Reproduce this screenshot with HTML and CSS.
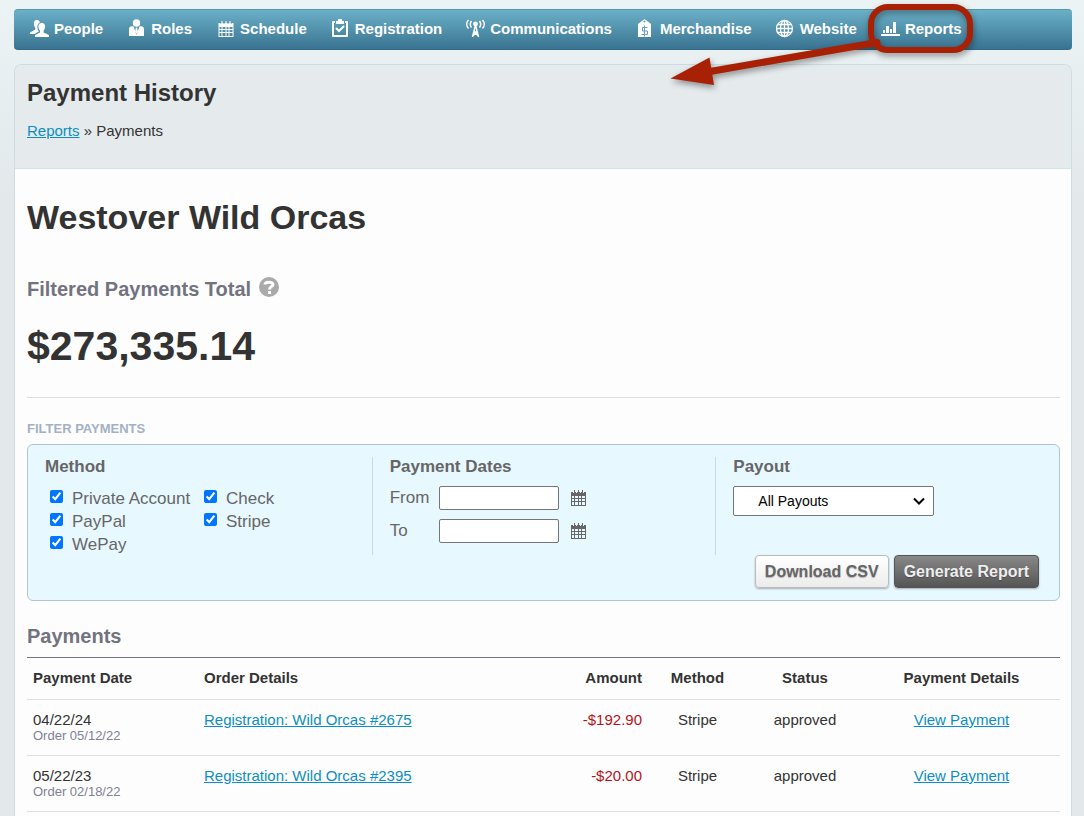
FILE: index.html
```html
<!DOCTYPE html>
<html lang="en">
<head>
<meta charset="utf-8">
<meta name="viewport" content="width=device-width, initial-scale=1">
<title>Payment History</title>
<link rel="stylesheet" href="styles.css">
</head>
<body>
<svg class="sprite" aria-hidden="true">
  <symbol id="calendar" viewBox="0 0 15 16">
    <path fill="currentColor" fill-rule="evenodd" d="M0 2h15v14H0zM1 6v2h2V6zm3 0v2h3V6zm4 0v2h2V6zm3 0v2h3V6zM1 9v2h2V9zm3 0v2h3V9zm4 0v2h2V9zm3 0v2h3V9zM1 12v3h2v-3zm3 0v3h3v-3zm4 0v3h2v-3zm3 0v3h3v-3zM2 2v1h1V2zm3 0v1h1V2zm4 0v1h1V2zm3 0v1h1V2z"/>
    <path fill="currentColor" d="M3 0h1v3H3zM7 0h1v3H7zM11 0h1v3h-1z"/>
  </symbol>
</svg>
<div class="page">
  <nav class="nav" aria-label="Main">
    <ul class="nav-list">
      <li><a href="#"><svg class="icon" viewBox="0 0 20 20"><path fill="#fff" d="M7 1c-2.500 0-3.500 2-3 4.500C4.200 7 4.700 8 5.300 8.700v1.800L0 13.500V15h5c.5-1 2-1.500 4-2.300C7 10 7 6 8.500 4.500 9 3.800 10 3.500 10 3.500 9.800 2 8.500 1 7 1z"/><path fill="#fff" d="M12 4c-3 0-4 2.300-3.400 4.800.2 1.200.8 2.200 1.400 2.800v1.900L5 16v2h14v-2l-5.400-2.500v-1.900c.7-.6 1.200-1.600 1.400-2.800.5-2.500-.5-4.800-3-4.800z"/></svg>People</a></li>
      <li><a href="#"><svg class="icon" viewBox="0 0 20 20"><circle cx="9.500" cy="4" r="3.700" fill="#fff"/><path fill="#fff" d="M2 17V10c0-1.500 1-2.500 3-2.700h1.500l3 8.700 3-8.700H14c2 .2 3 1.200 3 2.700v7z"/><path fill="#fff" d="M8.800 8.500h1.400l.6 4-1.300 2.500-1.300-2.500z"/></svg>Roles</a></li>
      <li><a href="#"><svg class="icon nav-cal"><use href="#calendar"/></svg>Schedule</a></li>
      <li><a href="#"><svg class="icon" viewBox="0 0 20 20"><path fill="none" stroke="#fff" stroke-width="2" stroke-linejoin="round" d="M4 3H2v14h14V3h-2"/><path fill="#fff" d="M5 2h2V0h4v2h2v3H5z"/><path fill="none" stroke="#fff" stroke-width="2" d="M5 9l3 3 5-5"/></svg>Registration</a></li>
      <li><a href="#"><svg class="icon" viewBox="0 0 20 20"><g fill="none" stroke="#fff" stroke-width="1.500"><path d="M2.500 1C.2 3.500.2 7 2.500 9.500M5.500 2C4 4 4 6.500 5.500 8.500M16.500 1c2.300 2.500 2.300 6 0 8.500M13.500 2c1.500 2 1.500 4.500 0 6.500M9.500 6L6.500 18M9.500 6l3 12M7.500 13h4M6 17.500l5-4.500M13 17.500L8 13"/></g><circle cx="9.500" cy="5" r="2.400" fill="#fff"/></svg>Communications</a></li>
      <li><a href="#"><svg class="icon" viewBox="0 0 20 20"><path fill="#fff" fill-rule="evenodd" d="M8.500 0L15 5v13H2V5zm0 1.500a1 1 0 100 2 1 1 0 000-2z"/><path fill="none" stroke="#6b9dbd" d="M11.500 8.500H6.500v3.500h5v3.500H5.500M8.500 6.500v11"/></svg>Merchandise</a></li>
      <li><a href="#"><svg class="icon" viewBox="0 0 20 20"><g fill="none" stroke="#fff" stroke-width="1.300"><circle cx="8.500" cy="9.500" r="8"/><ellipse cx="8.500" cy="9.500" rx="4" ry="8"/><path d="M8.500 1.500v16M.5 9.500h16M1.800 5.500h13.400M1.800 13.500h13.400"/></g></svg>Website</a></li>
      <li class="marked"><a href="#"><svg class="icon" viewBox="0 0 20 20"><path fill="#fff" d="M0 15h19v2H0zM2 11h2v3H2zM5 7h3v7H5zM9 10h2v4H9zM12 3h3v11h-3z"/></svg>Reports</a>
        <svg class="callout" viewBox="0 0 320 100" aria-hidden="true">
          <g>
            <rect x="211" y="7" width="99" height="43" rx="17" fill="none" stroke="#a92104" stroke-width="6"/>
            <path fill="none" stroke="#a92104" stroke-width="7" stroke-linecap="round" d="M217 42.500L50 71.500"/>
            <path fill="#a92104" d="M10.500 78.500L49.500 57.500 54 85z"/>
          </g>
        </svg>
      </li>
    </ul>
  </nav>

  <main class="panel">
    <header class="panel-head">
      <h1>Payment History</h1>
      <p class="crumbs"><a href="#">Reports</a> » Payments</p>
    </header>
    <div class="content">
      <h2 class="club">Westover Wild Orcas</h2>
      <h3 class="section total-label">Filtered Payments Total
        <svg class="help" viewBox="0 0 20 20" role="img" aria-label="Help"><circle cx="10" cy="10" r="10" fill="#aaa"/><path fill="none" stroke="#fff" stroke-width="3" d="M6 7.500C6 4.800 14 4.200 14 7.500c0 2.300-3.500 2-3.500 5"/><path fill="#fff" d="M9 14h3v3H9z"/></svg>
      </h3>
      <p class="total">$273,335.14</p>
      <h4 class="filter-title">FILTER PAYMENTS</h4>
      <form class="filter">
        <div class="filter-grid">
          <div class="filter-col" role="group" aria-labelledby="method-title">
            <div class="legend" id="method-title">Method</div>
            <div class="methods">
              <label><input type="checkbox" checked>Private Account</label>
              <label><input type="checkbox" checked>Check</label>
              <label><input type="checkbox" checked>PayPal</label>
              <label><input type="checkbox" checked>Stripe</label>
              <label><input type="checkbox" checked>WePay</label>
            </div>
          </div>
          <div class="filter-col" role="group" aria-labelledby="dates-title">
            <div class="legend" id="dates-title">Payment Dates</div>
            <div class="dates">
              <label for="from">From</label><input id="from" type="text"><button class="pick" type="button" aria-label="Pick start date"><svg><use href="#calendar"/></svg></button>
              <label for="to">To</label><input id="to" type="text"><button class="pick" type="button" aria-label="Pick end date"><svg><use href="#calendar"/></svg></button>
            </div>
          </div>
          <div class="filter-col">
            <label class="legend" for="payout">Payout</label>
            <select id="payout" class="payout"><option>All Payouts</option></select>
          </div>
        </div>
        <div class="actions">
          <button class="btn" type="button">Download CSV</button>
          <button class="btn btn-dark" type="submit">Generate Report</button>
        </div>
      </form>

      <h3 class="section payments-title">Payments</h3>
      <table class="payments">
        <colgroup><col class="c-date"><col><col class="c-amount"><col class="c-method"><col class="c-status"><col class="c-details"></colgroup>
        <thead>
          <tr><th>Payment Date</th><th>Order Details</th><th class="num">Amount</th><th class="mid">Method</th><th class="mid">Status</th><th class="mid">Payment Details</th></tr>
        </thead>
        <tbody>
          <tr><td>04/22/24<span class="sub">Order 05/12/22</span></td><td><a href="#">Registration: Wild Orcas #2675</a></td><td class="num neg">-$192.90</td><td class="mid">Stripe</td><td class="mid">approved</td><td class="mid"><a href="#">View Payment</a></td></tr>
          <tr><td>05/22/23<span class="sub">Order 02/18/22</span></td><td><a href="#">Registration: Wild Orcas #2395</a></td><td class="num neg">-$20.00</td><td class="mid">Stripe</td><td class="mid">approved</td><td class="mid"><a href="#">View Payment</a></td></tr>
        </tbody>
      </table>
    </div>
  </main>
</div>
</body>
</html>
```

FILE: styles.css
```css
* { box-sizing: border-box; }
body {
  margin: 0;
  font: 15px/18px "Liberation Sans", Arial, sans-serif;
  color: #333;
  background: #e3e9eb linear-gradient(#ebf3f5, #e3e9eb) no-repeat 0 0 / 100% 200px;
}
h1, h2, h3, h4, p, ul { margin: 0; padding: 0; }
a { color: #0c8fc0; }
.sprite { position: absolute; width: 0; height: 0; }
.page { display: flex; flex-direction: column; min-height: 100vh; padding: 9px 12px 0 14px; }

.nav { height: 41px; border-radius: 4px; background: linear-gradient(#6bb0c7, #397391); border-top: 1px solid #5296ad; border-bottom: 1px solid #316b88; }
.nav-list { display: flex; align-items: center; gap: 24px; height: 100%; padding: 0 0 2px 16px; list-style: none; }
.nav-list a { display: flex; align-items: center; gap: 4px; color: #fff; font-weight: bold; text-decoration: none; white-space: nowrap; }
.icon { width: 20px; height: 20px; flex: none; }
.nav-cal { height: 16px; color: #fff; }
.marked { position: relative; }
.callout { position: absolute; right: -18px; top: -19px; width: 320px; height: 100px; overflow: visible; pointer-events: none; filter: drop-shadow(1px 3px 3px rgba(0, 0, 0, .4)); }

.panel { flex: 1; margin-top: 14px; border: 1px solid #cddce2; border-bottom: 0; border-radius: 8px 8px 0 0; background: #fdfdfd; }
.panel-head { padding: 14px 12px 28px; border-bottom: 1px solid #d6e1e5; border-radius: 7px 7px 0 0; background: #e5eaec; }
h1 { font-size: 24px; line-height: 28px; }
.crumbs { margin-top: 15px; }

.content { padding: 28px 11px 0 12px; }
.club { font-size: 34px; line-height: 40px; }
.section { font-size: 20px; line-height: 24px; color: #737380; }
.total-label { display: flex; align-items: flex-start; gap: 8px; margin-top: 40px; }
.help { width: 20px; height: 20px; }
.total { margin-top: 21px; padding-bottom: 27px; border-bottom: 1px solid #ddd; font-size: 41px; line-height: 48px; font-weight: bold; }
.filter-title { margin-top: 23px; font-size: 13px; line-height: 16px; color: #a3b1c4; }

.filter { margin-top: 7px; padding: 12px 0; border: 1px solid #adc6d1; border-radius: 6px; background: #e8f8ff; color: #666; font-size: 17px; line-height: 20px; }
.filter-grid { display: grid; grid-template-columns: 1fr 1fr 1fr; }
.filter-col { min-width: 0; min-height: 98px; padding: 0 17px; }
.filter-col + .filter-col { border-left: 1px solid #c9dae3; }
.legend { display: block; margin-bottom: 9px; font-weight: bold; }
.methods { display: grid; grid-template-columns: 154px 1fr; grid-auto-rows: 23px; }
.methods label { display: flex; align-items: flex-end; gap: 9px; white-space: nowrap; }
.methods input { width: 13px; height: 13px; margin: 0 0 6px 5px; }
.dates { display: grid; grid-template-columns: 49px 120px auto; grid-auto-rows: 24px; align-items: center; justify-content: start; row-gap: 9px; }
.dates input { width: 100%; height: 24px; border: 1px solid #767676; border-radius: 2px; background: #fff; }
.pick { width: 15px; height: 16px; margin-left: 12px; padding: 0; border: 0; background: none; color: #666; }
.pick svg { display: block; width: 15px; height: 16px; }
.payout {
  appearance: none; width: 201px; height: 30px; padding: 0 24px; border: 1px solid #767676; border-radius: 2px;
  background: #fff url("data:image/svg+xml,%3Csvg xmlns='http://www.w3.org/2000/svg' width='12' height='8'%3E%3Cpath d='M1 1.500l5 5 5-5' fill='none' stroke='%23000' stroke-width='2'/%3E%3C/svg%3E") no-repeat right 8px center;
  color: #000; font: 14px "Liberation Sans", Arial, sans-serif;
}
.actions { display: flex; justify-content: flex-end; gap: 5px; padding-right: 20px; }
.btn { height: 33px; padding: 0 9px; border: 1px solid #bbb; border-radius: 4px; background: linear-gradient(#fff, #ececec); box-shadow: 0 1px 2px rgba(0, 0, 0, .3); color: #666; font: bold 16px "Liberation Sans", Arial, sans-serif; text-shadow: 0 1px 1px rgba(0, 0, 0, .25); }
.btn-dark { border-color: #555; background: linear-gradient(#888, #555); color: #eee; }

.payments-title { margin-top: 23px; }
.payments { width: 100%; margin-top: 9px; border-collapse: collapse; table-layout: fixed; border-top: 1px solid #737380; line-height: 16px; }
.c-date { width: 171px; }
.c-amount { width: 150px; }
.c-method { width: 99px; }
.c-status { width: 116px; }
.c-details { width: 197px; }
.payments th, .payments td { padding: 12px 6px 11px; border-bottom: 1px solid #ddd; text-align: left; vertical-align: top; }
.payments th { padding-bottom: 13px; }
.payments .num { text-align: right; }
.payments .mid { text-align: center; }
.payments .neg { color: #b5121b; }
.sub { display: block; font-size: 13px; color: #808096; }
```
